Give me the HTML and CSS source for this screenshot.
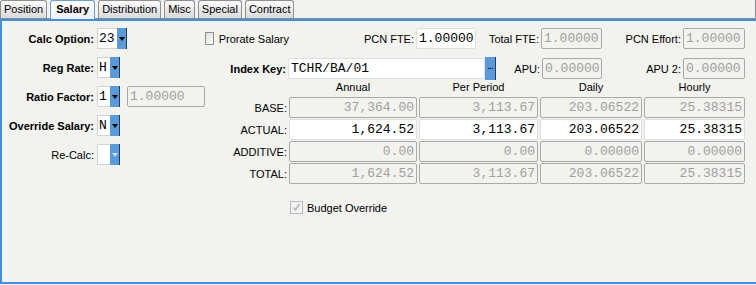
FILE: index.html
```html
<!DOCTYPE html>
<html lang="en">
<head>
    <meta charset="UTF-8">
    <title>Salary</title>
    <link rel="stylesheet" href="styles.css">
</head>
<body>

<div class="tabs">
    <div class="tab">Position</div>
    <div class="tab active">Salary</div>
    <div class="tab">Distribution</div>
    <div class="tab">Misc</div>
    <div class="tab">Special</div>
    <div class="tab">Contract</div>
</div>

<div class="panel">
    <div class="calc">
        <div class="lbl bold">Calc Option:</div>
        <div class="combo wide"><span class="val">23</span><span class="drop"></span></div>

        <div class="lbl bold">Reg Rate:</div>
        <div class="combo"><span class="val">H</span><span class="drop"></span></div>

        <div class="lbl bold">Ratio Factor:</div>
        <div class="ratio">
            <div class="combo"><span class="val">1</span><span class="drop"></span></div>
            <input type="text" class="field off ratio-val" value="1.00000" disabled>
        </div>

        <div class="lbl bold">Override Salary:</div>
        <div class="combo"><span class="val">N</span><span class="drop"></span></div>

        <div class="lbl">Re-Calc:</div>
        <div class="combo"><span class="val"></span><span class="drop dim"></span></div>
    </div>

    <div class="main">
        <div class="row-top">
            <div class="checkline"><span class="check"></span>Prorate Salary</div>
            <div class="lbl pad">PCN FTE:</div>
            <input type="text" class="field" value="1.00000" readonly>
            <div class="lbl pad">Total FTE:</div>
            <input type="text" class="field off" value="1.00000" disabled>
            <div class="lbl pad">PCN Effort:</div>
            <input type="text" class="field off" value="1.00000" disabled>
        </div>

        <div class="row-key">
            <div class="lbl bold pad">Index Key:</div>
            <input type="text" class="field" value="TCHR/BA/01" readonly>
            <div class="dots">...</div>
            <div class="lbl pad">APU:</div>
            <input type="text" class="field off" value="0.00000" disabled>
            <div class="lbl pad">APU 2:</div>
            <input type="text" class="field off" value="0.00000" disabled>
        </div>

        <div class="amounts">
            <div></div>
            <div class="head">Annual</div>
            <div class="head">Per Period</div>
            <div class="head">Daily</div>
            <div class="head">Hourly</div>

            <div class="lbl">BASE:</div>
            <input type="text" class="field off num" value="37,364.00" disabled>
            <input type="text" class="field off num" value="3,113.67" disabled>
            <input type="text" class="field off num" value="203.06522" disabled>
            <input type="text" class="field off num" value="25.38315" disabled>

            <div class="lbl">ACTUAL:</div>
            <input type="text" class="field num" value="1,624.52" readonly>
            <input type="text" class="field num" value="3,113.67" readonly>
            <input type="text" class="field num" value="203.06522" readonly>
            <input type="text" class="field num" value="25.38315" readonly>

            <div class="lbl">ADDITIVE:</div>
            <input type="text" class="field off num" value="0.00" disabled>
            <input type="text" class="field off num" value="0.00" disabled>
            <input type="text" class="field off num" value="0.00000" disabled>
            <input type="text" class="field off num" value="0.00000" disabled>

            <div class="lbl">TOTAL:</div>
            <input type="text" class="field off num" value="1,624.52" disabled>
            <input type="text" class="field off num" value="3,113.67" disabled>
            <input type="text" class="field off num" value="203.06522" disabled>
            <input type="text" class="field off num" value="25.38315" disabled>
        </div>

        <div class="budget">
            <span class="check off">
                <svg width="11" height="11" viewBox="0 0 11 11"><path d="M2.5 5.5 L4.5 8 L8.5 2" fill="none" stroke="#b4b4b4" stroke-width="1.4"/></svg>
            </span>
            Budget Override
        </div>
    </div>
</div>

</body>
</html>
```

FILE: styles.css
```css
body {
    margin: 0;
    width: 756px;
    height: 285px;
    overflow: hidden;
    background-color: #f2f2ee;
    font-family: 'Liberation Sans', Arial, sans-serif;
    font-size: 11px;
    color: #000;
}

/* tab strip */
.tabs {
    display: flex;
    gap: 3px;
    height: 19px;
    box-sizing: border-box;
    border-bottom: 1px solid #8d8d8d;
    border-right: 1px solid #8d8d8d;
}

.tab {
    height: 18px;
    line-height: 17px;
    padding: 0 3px;
    box-sizing: border-box;
    border: 1px solid #8f8f8f;
    border-bottom: none;
    border-radius: 3px 3px 0 0;
    background: linear-gradient(#fcfcfc, #d9d9d9);
    white-space: nowrap;
}

.tab.active {
    height: 19px;
    padding: 0 5px;
    font-weight: bold;
    border-color: #6b9fd6;
    background: linear-gradient(#ffffff, #eef1f4);
}

/* main panel */
.panel {
    display: flex;
    height: 265px;
    box-sizing: border-box;
    border-top: 2px solid #3f8ee0;
    border-left: 2px solid #3f8ee0;
    border-bottom: 2px solid #3f8ee0;
}

.lbl {
    text-align: right;
    white-space: nowrap;
}

.lbl.bold {
    font-weight: bold;
}

.lbl.pad {
    padding-right: 2px;
}

/* left column */
.calc {
    width: 203px;
    padding-top: 7px;
    display: grid;
    grid-template-columns: 92px auto;
    column-gap: 3px;
    row-gap: 8px;
    align-content: start;
    align-items: center;
}

.combo {
    display: flex;
    height: 21px;
}

.combo .val {
    width: 13px;
    box-sizing: border-box;
    background-color: #fff;
    border: 1px solid #d4d4d4;
    border-right: none;
    font-family: 'Liberation Mono', 'Courier New', monospace;
    font-size: 13px;
    line-height: 19px;
    padding-left: 1px;
}

.combo.wide .val {
    width: 20px;
}

.drop {
    width: 10px;
    box-sizing: border-box;
    background-color: #5b9ad8;
    border-right: 1px solid #1f3d66;
    display: flex;
    align-items: center;
    justify-content: center;
}

.drop::after {
    content: '';
    border-top: 4px solid #000;
    border-left: 3.5px solid transparent;
    border-right: 3.5px solid transparent;
}

.drop.dim::after {
    border-top-color: #c9def3;
}

.ratio {
    display: flex;
    gap: 7px;
}

.ratio-val {
    width: 61px;
}

/* right part */
.main {
    width: 540px;
    padding-top: 7px;
}

.field {
    width: 100%;
    height: 21px;
    margin: 0;
    box-sizing: border-box;
    padding: 0 0 0 2px;
    border: 1px solid #dedede;
    border-radius: 2px;
    background-color: #fff;
    color: #000;
    font-family: 'Liberation Mono', 'Courier New', monospace;
    font-size: 13px;
    outline: none;
}

.field.off {
    background-color: transparent;
    border-color: #a9a9a9;
    color: #a0a0a0;
}

.field.num {
    text-align: right;
    padding: 0 2px 0 0;
}

.row-top {
    display: grid;
    grid-template-columns: 84px 127px 60px 65px 61px 81px 62px;
    height: 21px;
    align-items: center;
}

.checkline {
    display: flex;
    align-items: center;
    gap: 5px;
    white-space: nowrap;
}

.check {
    width: 13px;
    height: 13px;
    box-sizing: border-box;
    border: 1px solid #8e8f8f;
    background: linear-gradient(135deg, #dadada, #ffffff);
    display: flex;
    align-items: center;
    justify-content: center;
}

.check.off {
    border-color: #b8b8b8;
    background: #f4f4f4;
}

.row-key {
    display: grid;
    grid-template-columns: 83px 197px 11px 46px 60px 81px 62px;
    margin-top: 8px;
    height: 21px;
    align-items: center;
}

.dots {
    height: 23px;
    box-sizing: border-box;
    background-color: #5b9ad8;
    border-right: 1px solid #1f3d66;
    font-size: 10px;
    line-height: 17px;
    text-align: center;
    letter-spacing: -1px;
}

.amounts {
    display: grid;
    grid-template-columns: 82px 128px 119px 102px 101px;
    grid-template-rows: 18px repeat(4, 21px);
    column-gap: 2px;
    row-gap: 1px;
    align-items: center;
}

.head {
    text-align: center;
}

.budget {
    display: flex;
    align-items: center;
    gap: 4px;
    margin-top: 17px;
    margin-left: 85px;
}
```
